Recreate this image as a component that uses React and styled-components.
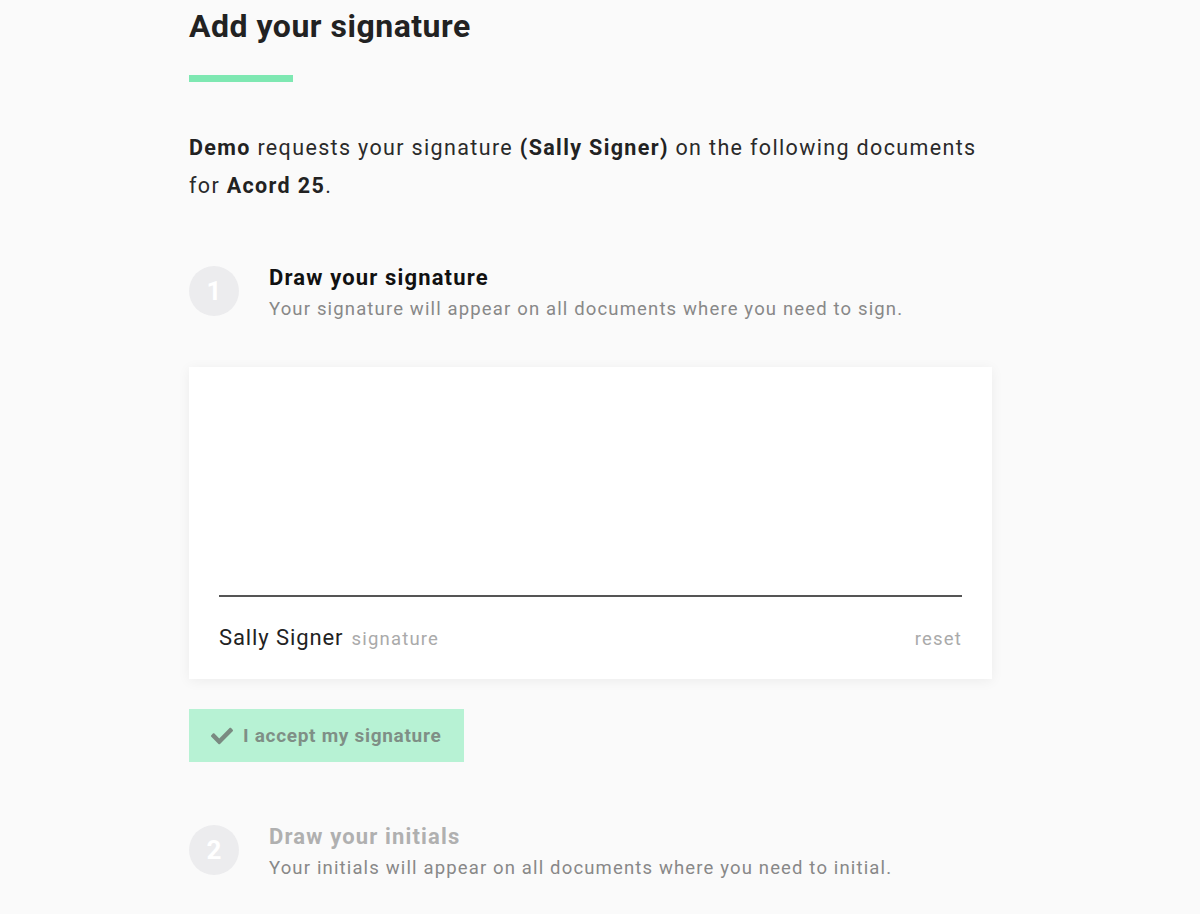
import React from "react";
import styled, { createGlobalStyle } from "styled-components";
import { FaCheck } from "react-icons/fa";

const GlobalStyle = createGlobalStyle`
  html, body {
    margin: 0;
    padding: 0;
    background: #fafafa;
  }
  body {
    font-family: Roboto, "Liberation Sans", sans-serif;
    color: #222;
  }
`;

const Page = styled.div`
  width: 803px;
  margin-left: 189px;
  padding-top: 6px;
  padding-bottom: 40px;
`;

const Title = styled.h1`
  margin: 0;
  font-size: 32px;
  line-height: 40px;
  font-weight: 700;
  letter-spacing: 0.5px;
  color: #222;
`;

const Accent = styled.div`
  width: 104px;
  height: 7px;
  background: #7ee8b2;
  margin-top: 29px;
`;

const Intro = styled.p`
  margin: 47px 0 0;
  max-width: 790px;
  font-size: 21.5px;
  line-height: 38px;
  letter-spacing: 1.35px;
  color: #2a2a2a;
  b {
    font-weight: 700;
    color: #222;
  }
`;

const Step = styled.div`
  display: flex;
  align-items: center;
  gap: 30px;
  margin-top: ${(p) => p.$top}px;
`;

const StepNum = styled.div`
  width: 50px;
  height: 50px;
  border-radius: 50%;
  background: #ececee;
  color: #fff;
  font-size: 26px;
  font-weight: 700;
  display: flex;
  align-items: center;
  justify-content: center;
  flex-shrink: 0;
`;

const StepText = styled.div`
  display: flex;
  flex-direction: column;
  gap: 4px;
  padding-top: 4px;
`;

const StepTitle = styled.div`
  font-size: 22px;
  line-height: 28px;
  font-weight: 700;
  letter-spacing: 1.15px;
  color: ${(p) => (p.$muted ? "#b0b0b0" : "#111")};
`;

const StepSub = styled.div`
  font-size: 18.5px;
  line-height: 26px;
  color: #888;
  letter-spacing: 1.15px;
`;

const Card = styled.div`
  margin-top: 45px;
  background: #fff;
  height: 312px;
  box-shadow: 0 2px 12px rgba(0, 0, 0, 0.06);
  padding: 0 30px;
  display: flex;
  flex-direction: column;
  justify-content: flex-end;
  box-sizing: border-box;
`;

const SignLine = styled.div`
  height: 2px;
  background: #555;
`;

const CardFooter = styled.div`
  display: flex;
  align-items: baseline;
  justify-content: space-between;
  padding: 28px 0 29px;
`;

const Signer = styled.div`
  display: flex;
  align-items: baseline;
  gap: 8px;
`;

const SignerName = styled.span`
  font-size: 22px;
  letter-spacing: 0.9px;
  color: #222;
`;

const Hint = styled.span`
  font-size: 18.5px;
  color: #aaa;
  letter-spacing: 1.2px;
`;

const AcceptButton = styled.button`
  margin-top: 30px;
  width: 275px;
  height: 53px;
  border: none;
  background: #b7f2d4;
  display: flex;
  align-items: center;
  gap: 10px;
  padding: 0 22px;
  font-family: inherit;
  font-size: 19px;
  font-weight: 700;
  letter-spacing: 0.7px;
  color: #7f8f86;
  cursor: pointer;
`;

export default function App() {
  return (
    <>
      <GlobalStyle />
      <Page>
        <Title>Add your signature</Title>
        <Accent />
        <Intro>
          <b>Demo</b> requests your signature <b>(Sally Signer)</b> on the following documents
          for <b>Acord 25</b>.
        </Intro>

        <Step $top={55}>
          <StepNum>1</StepNum>
          <StepText>
            <StepTitle>Draw your signature</StepTitle>
            <StepSub>Your signature will appear on all documents where you need to sign.</StepSub>
          </StepText>
        </Step>

        <Card>
          <SignLine />
          <CardFooter>
            <Signer>
              <SignerName>Sally Signer</SignerName>
              <Hint>signature</Hint>
            </Signer>
            <Hint>reset</Hint>
          </CardFooter>
        </Card>

        <AcceptButton>
          <FaCheck size={22} color="#7a8a81" />
          I accept my signature
        </AcceptButton>

        <Step $top={57}>
          <StepNum>2</StepNum>
          <StepText>
            <StepTitle $muted>Draw your initials</StepTitle>
            <StepSub>Your initials will appear on all documents where you need to initial.</StepSub>
          </StepText>
        </Step>
      </Page>
    </>
  );
}
